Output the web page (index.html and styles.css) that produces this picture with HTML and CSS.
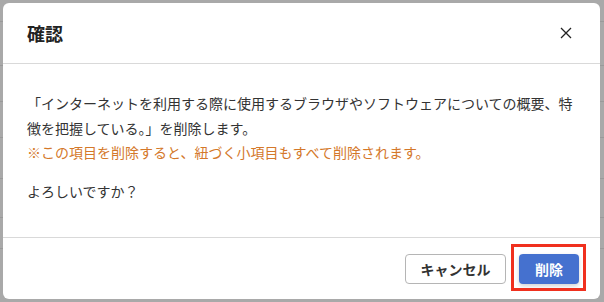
FILE: index.html
```html
<!DOCTYPE html>
<html lang="ja">
<head>
<meta charset="utf-8">
<link rel="stylesheet" href="styles.css">
</head>
<body>
<div class="backdrop">
  <div class="bg-row r1"></div>
  <div class="bg-row r2"></div>
  <div class="bg-row r3"></div>
  <div class="bg-row r4"></div>
  <div class="bg-row r5"></div>
  <div class="bg-row r6"></div>
  <div class="bg-row r7"></div>
</div>
<div class="dialog">
  <div class="dlg-header">
    <h1 class="dlg-title">確認</h1>
    <span class="dlg-close">
      <svg width="12" height="12" viewBox="0 0 12 12"><path d="M1 1L11 11M11 1L1 11" stroke="#222" stroke-width="1.3" fill="none"/></svg>
    </span>
  </div>
  <div class="dlg-body">
    <p class="msg">「インターネットを利用する際に使用するブラウザやソフトウェアについての概要、特徴を把握している。」を削除します。<br><span class="warn">※この項目を削除すると、紐づく小項目もすべて削除されます。</span></p>
    <p class="msg">よろしいですか？</p>
  </div>
  <div class="dlg-footer">
    <button class="btn btn-cancel">キャンセル</button>
    <button class="btn btn-delete">削除</button>
  </div>
</div>
</body>
</html>
```
FILE: styles.css
```css
html, body {
  margin: 0;
  padding: 0;
}
body {
  width: 604px;
  height: 302px;
  background: #a9a9a9;
  font-family: "Noto Sans CJK JP", "Noto Sans", sans-serif;
  position: relative;
  overflow: hidden;
}
.backdrop {
  display: flex;
  flex-direction: column;
}
.bg-row {
  border-bottom: 1px solid #9a9a9a;
}
.r1 { height: 21px; }
.r2 { height: 43px; }
.r3 { height: 35px; }
.r4 { height: 35px; }
.r5 { height: 40px; }
.r6 { height: 38px; }
.r7 { height: 30px; }
.dialog {
  position: absolute;
  left: 3px;
  top: 3px;
  width: 597px;
  height: 296px;
  background: #fff;
  border-radius: 6px;
  display: flex;
  flex-direction: column;
  box-sizing: border-box;
}
.dlg-header {
  height: 60px;
  border-bottom: 1px solid #d9d9d9;
  display: flex;
  align-items: center;
  justify-content: space-between;
  padding: 0 28px 0 24px;
  box-sizing: content-box;
}
.dlg-title {
  margin: 0;
  font-size: 18px;
  font-weight: bold;
  color: #222;
  line-height: 1;
  padding-bottom: 1px;
}
.dlg-close {
  display: flex;
  width: 12px;
  height: 12px;
}
.dlg-body {
  padding: 27px 24px 34px 24px;
  border-bottom: 1px solid #d9d9d9;
}
.msg {
  margin: 0;
  font-size: 14px;
  line-height: 24.5px;
  color: #333;
}
.msg + .msg {
  margin-top: 14px;
}
.warn {
  color: #d4782a;
}
.dlg-footer {
  display: flex;
  justify-content: flex-end;
  align-items: flex-start;
  gap: 13px;
  padding: 16px 21px 0 0;
}
.btn {
  height: 30px;
  border-radius: 4px;
  font-family: "Noto Sans CJK JP", "Noto Sans", sans-serif;
  font-size: 14px;
  font-weight: bold;
  line-height: 1;
  padding: 0;
  cursor: pointer;
}
.btn-cancel {
  width: 101px;
  background: #fff;
  border: 1px solid #b5b5b5;
  color: #333;
}
.btn-delete {
  width: 60px;
  background: #4571cf;
  border: none;
  color: #fff;
  position: relative;
  box-shadow: 0 2px 4px rgba(0,0,0,0.18);
}
.btn-delete::after {
  content: "";
  position: absolute;
  left: -8px;
  right: -7px;
  top: -10px;
  bottom: -7px;
  border: 3px solid #f0301e;
}
```
